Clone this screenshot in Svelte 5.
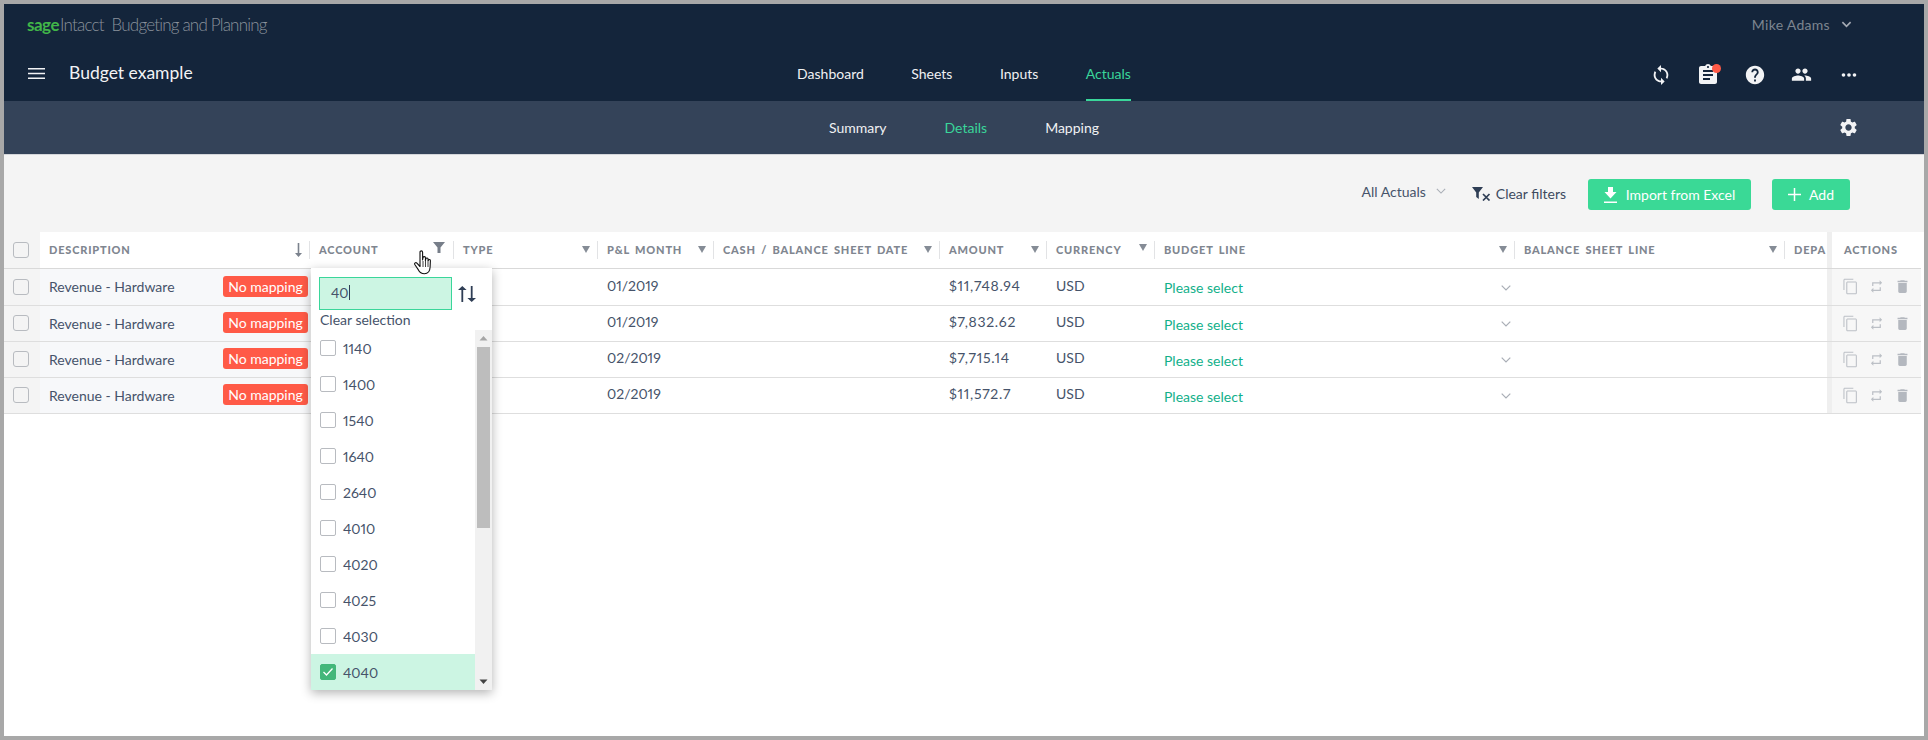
<script>
  const columns = [
    { label: 'Description', width: 270, sort: true },
    { label: 'Account', width: 144, funnel: true },
    { label: 'Type', width: 144 },
    { label: 'P&L Month', width: 116 },
    { label: 'Cash / Balance Sheet Date', width: 226 },
    { label: 'Amount', width: 107 },
    { label: 'Currency', width: 108, raised: true },
    { label: 'Budget Line', width: 360 },
    { label: 'Balance Sheet Line', width: 270 },
    { label: 'Depa', width: 42, clipped: true }
  ];

  const rows = [
    { month: '01/2019', amount: '$11,748.94' },
    { month: '01/2019', amount: '$7,832.62' },
    { month: '02/2019', amount: '$7,715.14' },
    { month: '02/2019', amount: '$11,572.7' }
  ];

  const accounts = ['1140', '1400', '1540', '1640', '2640', '4010', '4020', '4025', '4030', '4040'];
  const selected = '4040';

  const mainTabs = ['Dashboard', 'Sheets', 'Inputs', 'Actuals'];
  const subTabs = ['Summary', 'Details', 'Mapping'];
  const gridColumns = '36px ' + columns.map((c) => c.width + 'px').join(' ') + ' 94px';
</script>

<div class="frame">
  <header class="top">
    <div class="brand-row">
      <div class="brand">
        <span class="sage">sage</span><span class="intacct">Intacct</span>
        <span class="product">Budgeting and Planning</span>
      </div>
      <div class="user">
        <span>Mike Adams</span>
        <svg width="11" height="11" viewBox="0 0 12 12"><path d="M1.5 3.5 6 8l4.5-4.5" fill="none" stroke="#a4aab3" stroke-width="1.8" /></svg>
      </div>
    </div>
    <div class="main-row">
      <div class="title">
        <svg class="burger" width="17" height="11" viewBox="0 0 17 11"><path d="M0 .75h17M0 5.5h17M0 10.25h17" stroke="#f2f3f5" stroke-width="1.5" /></svg>
        <span>Budget example</span>
      </div>
      <nav class="tabs">
        {#each mainTabs as tab}
          <span class="tab" class:active={tab === 'Actuals'}>{tab}</span>
        {/each}
      </nav>
      <div class="top-icons">
        <svg width="22" height="22" viewBox="0 0 24 24"><path fill="#f2f3f5" d="M12 4V1L8 5l4 4V6c3.31 0 6 2.69 6 6 0 1.01-.25 1.97-.7 2.8l1.46 1.46C19.54 15.03 20 13.57 20 12c0-4.42-3.58-8-8-8zm0 14c-3.31 0-6-2.69-6-6 0-1.01.25-1.97.7-2.8L5.24 7.74C4.46 8.97 4 10.43 4 12c0 4.42 3.58 8 8 8v3l4-4-4-4v3z" /></svg>
        <span class="clip">
          <svg width="24" height="24" viewBox="0 0 24 24"><path fill="#f2f3f5" d="M19 3h-4.18C14.4 1.84 13.3 1 12 1c-1.3 0-2.4.84-2.82 2H5c-1.1 0-2 .9-2 2v14c0 1.1.9 2 2 2h14c1.1 0 2-.9 2-2V5c0-1.1-.9-2-2-2zm-7 0c.55 0 1 .45 1 1s-.45 1-1 1-1-.45-1-1 .45-1 1-1zm2 14H7v-2h7v2zm3-4H7v-2h10v2zm0-4H7V7h10v2z" /></svg>
          <i class="badge"></i>
        </span>
        <svg width="22" height="22" viewBox="0 0 24 24"><path fill="#f2f3f5" d="M12 2C6.48 2 2 6.48 2 12s4.48 10 10 10 10-4.48 10-10S17.52 2 12 2zm1 17h-2v-2h2v2zm2.07-7.75l-.9.92C13.45 12.9 13 13.5 13 15h-2v-.5c0-1.1.45-2.1 1.17-2.83l1.24-1.26c.37-.36.59-.86.59-1.41 0-1.1-.9-2-2-2s-2 .9-2 2H8c0-2.21 1.79-4 4-4s4 1.79 4 4c0 .88-.36 1.68-.93 2.25z" /></svg>
        <svg width="21" height="21" viewBox="0 0 24 24"><path fill="#f2f3f5" d="M16 11c1.66 0 2.99-1.34 2.99-3S17.66 5 16 5c-1.66 0-3 1.34-3 3s1.34 3 3 3zm-8 0c1.66 0 2.99-1.34 2.99-3S9.66 5 8 5C6.34 5 5 6.34 5 8s1.34 3 3 3zm0 2c-2.33 0-7 1.17-7 3.5V19h14v-2.5c0-2.33-4.67-3.5-7-3.5zm8 0c-.29 0-.62.02-.97.05 1.16.84 1.97 1.97 1.97 3.45V19h6v-2.5c0-2.33-4.67-3.5-7-3.5z" /></svg>
        <svg width="22" height="22" viewBox="0 0 24 24"><g fill="#f2f3f5"><circle cx="6" cy="12" r="2" /><circle cx="12" cy="12" r="2" /><circle cx="18" cy="12" r="2" /></g></svg>
      </div>
    </div>
  </header>

  <div class="subnav">
    <span></span>
    <nav class="subtabs">
      {#each subTabs as tab}
        <span class="tab" class:active={tab === 'Details'}>{tab}</span>
      {/each}
    </nav>
    <div class="gear">
      <svg width="21" height="21" viewBox="0 0 24 24"><path fill="#f2f3f5" d="M19.14 12.94c.04-.3.06-.61.06-.94 0-.32-.02-.64-.07-.94l2.03-1.58c.18-.14.23-.41.12-.61l-1.92-3.32c-.12-.22-.37-.29-.59-.22l-2.39.96c-.5-.38-1.03-.7-1.62-.94l-.36-2.54c-.04-.24-.24-.41-.48-.41h-3.84c-.24 0-.43.17-.47.41l-.36 2.54c-.59.24-1.13.57-1.62.94l-2.39-.96c-.22-.08-.47 0-.59.22L2.74 8.87c-.12.21-.08.47.12.61l2.03 1.58c-.05.3-.09.63-.09.94s.02.64.07.94l-2.03 1.58c-.18.14-.23.41-.12.61l1.92 3.32c.12.22.37.29.59.22l2.39-.96c.5.38 1.03.7 1.62.94l.36 2.54c.05.24.24.41.48.41h3.84c.24 0 .44-.17.47-.41l.36-2.54c.59-.24 1.13-.56 1.62-.94l2.39.96c.22.08.47 0 .59-.22l1.92-3.32c.12-.22.07-.47-.12-.61l-2.01-1.58zM12 15.6c-1.98 0-3.6-1.62-3.6-3.6s1.62-3.6 3.6-3.6 3.6 1.62 3.6 3.6-1.62 3.6-3.6 3.6z" /></svg>
    </div>
  </div>

  <div class="toolbar">
    <div class="view-select">
      <span>All Actuals</span>
      <svg width="10" height="10" viewBox="0 0 12 12"><path d="M1 3.5 6 8.5l5-5" fill="none" stroke="#a9aeb6" stroke-width="1.3" /></svg>
    </div>
    <div class="clear">
      <svg width="19" height="14" viewBox="0 0 19 14">
        <path fill="#2f3e55" d="M0 0h11L6.800 5.500V12L4.200 10V5.500z" />
        <path d="M11 7l6.500 6.500M17.500 7L11 13.500" stroke="#2f3e55" stroke-width="1.700" />
      </svg>
      <span>Clear filters</span>
    </div>
    <button class="btn import">
      <svg width="13" height="16" viewBox="0 0 13 16"><path fill="#fff" d="M4 0h5v5h3.500L6.500 11.500.500 5H4zM0 14.500h13V16H0z" /></svg>
      Import from Excel
    </button>
    <button class="btn add">
      <svg width="13" height="13" viewBox="0 0 13 13"><path d="M6.500 0v13M0 6.500h13" stroke="#fff" stroke-width="1.500" /></svg>
      Add
    </button>
  </div>

  <div class="table" style="grid-template-columns: {gridColumns}">
    <div class="head-check"><span class="box clear-box"></span></div>
    {#each columns as col}
      <div class="hcell">
        <div class="hinner" class:clipped={col.clipped}>
          <span class="hlabel">{col.label}</span>
          {#if col.sort}
            <svg width="7" height="14" viewBox="0 0 7 14"><path fill="#7b828d" d="M2.700 0h1.600v10H7l-3.500 4L0 10h2.700z" /></svg>
          {:else if col.funnel}
            <svg class="funnel" width="12" height="11" viewBox="0 0 12 11"><path fill="#777e89" d="M0 0h12L7.500 5.500V11h-3V5.500z" /></svg>
          {:else if !col.clipped}
            <svg class:raised={col.raised} width="8" height="7" viewBox="0 0 8 7"><path fill="#858c96" d="M0 0h8L4 7z" /></svg>
          {/if}
        </div>
      </div>
    {/each}
    <div class="hcell actions-head"><span class="hlabel">Actions</span></div>

    {#each rows as row}
      <div class="cell check"><span class="box clear-box"></span></div>
      <div class="cell desc">
        <span>Revenue - Hardware</span>
        <span class="no-map">No mapping</span>
      </div>
      <div class="cell"></div>
      <div class="cell"></div>
      <div class="cell text up">{row.month}</div>
      <div class="cell"></div>
      <div class="cell text up amount">{row.amount}</div>
      <div class="cell text up">USD</div>
      <div class="cell text select">
        <span>Please select</span>
        <svg width="10" height="6" viewBox="0 0 10 6"><path d="M.7.700 5 5 9.300.700" fill="none" stroke="#a9aeb6" stroke-width="1.200" /></svg>
      </div>
      <div class="cell"></div>
      <div class="cell"></div>
      <div class="cell actions">
        <svg width="17" height="17" viewBox="0 0 24 24"><path fill="#bcc0c6" d="M16 1H4c-1.100 0-2 .900-2 2v14h1.500V2.500H16V1zm3 4H8c-1.100 0-2 .900-2 2v14c0 1.100.900 2 2 2h11c1.100 0 2-.900 2-2V7c0-1.100-.900-2-2-2zm.500 16.500h-12v-15h12v15z" /></svg>
        <svg width="15" height="15" viewBox="0 0 24 24"><path fill="#bcc0c6" d="M7 7h10v3l4-4-4-4v3H5v6h2V7zm10 10H7v-3l-4 4 4 4v-3h12v-6h-2v4z" /></svg>
        <svg width="17" height="17" viewBox="0 0 24 24"><path fill="#b4b8bf" d="M6 19c0 1.100.900 2 2 2h8c1.100 0 2-.900 2-2V7H6v12zM19 4h-3.500l-1-1h-5l-1 1H5v2h14V4z" /></svg>
      </div>
    {/each}

    <div class="popup">
      <div class="search-row">
        <div class="search">40<i class="caret"></i></div>
        <svg width="18" height="16" viewBox="0 0 18 16"><path fill="#2f3e55" d="M3.400 16V4H0L4.300 0l4.300 4H5.200v12zM12.800 0v12H9.400l4.300 4 4.300-4h-3.400V0z" /></svg>
      </div>
      <div class="clear-sel">Clear selection</div>
      <div class="list">
        <div class="items">
          {#each accounts as acc}
            <div class="item" class:on={acc === selected}>
              <span class="box" class:checked={acc === selected}>
                {#if acc === selected}
                  <svg width="12" height="10" viewBox="0 0 12 10"><path d="M1.500 5 4.500 8 10.500 1.500" fill="none" stroke="#fff" stroke-width="1.300" /></svg>
                {/if}
              </span>
              <span>{acc}</span>
            </div>
          {/each}
        </div>
        <div class="scrollbar">
          <svg width="17" height="17" viewBox="0 0 17 17"><path fill="#a5a5a5" d="M4.500 10.500 8.500 6l4 4.500z" /></svg>
          <div class="track"><div class="thumb"></div></div>
          <svg width="17" height="17" viewBox="0 0 17 17"><path fill="#444" d="M4.500 6.500 8.500 11l4-4.500z" /></svg>
        </div>
      </div>
    </div>

    <svg class="pointer" width="20" height="26" viewBox="0 0 20 26">
      <path fill="#fff" stroke="#111" stroke-width="1.100" stroke-linejoin="round" d="M6 2.200c0-1.800 2.600-1.800 2.600 0V10l.4-2.400c.3-1.500 2.500-1.300 2.500.3l-.1 2.600.4-1.700c.4-1.300 2.300-1 2.300.4l-.1 2 .4-1c.5-1.100 2-.7 2 .5l-.3 6.600c-.2 3.700-1.800 6.400-5.700 6.400-3.300 0-4.800-1.300-6-3.800L.8 14.500c-.7-1.400 1-2.500 2.100-1.300L6 16.500z" />
      <path d="M9 11v6M11.500 11v6M14 12v5" stroke="#111" stroke-width=".8" />
    </svg>
  </div>
</div>

<style>
  :global(body) {
    margin: 0;
    background: #fff;
  }

  .frame {
    box-sizing: border-box;
    width: 1928px;
    height: 740px;
    border: 4px solid #a8a8a8;
    overflow: hidden;
    font-family: Lato, 'Open Sans', sans-serif;
    font-size: 14px;
    font-variant-numeric: proportional-nums;
    color: #46536a;
    background: #fff;
  }

  .top {
    height: 97px;
    background: #14253b;
  }

  .brand-row {
    height: 41px;
    display: flex;
    align-items: center;
    justify-content: space-between;
    padding: 0 72px 0 23px;
  }

  .brand {
    font-size: 17px;
    font-weight: 300;
    letter-spacing: -0.8px;
    color: #8a929c;
    white-space: nowrap;
  }

  .sage {
    color: #41b649;
    font-weight: 700;
    letter-spacing: -0.5px;
  }

  .intacct {
    margin-left: 1px;
  }

  .product {
    margin-left: 4px;
  }

  .user {
    display: flex;
    align-items: center;
    gap: 11px;
    color: #7d8590;
    letter-spacing: 0.3px;
  }

  .main-row {
    height: 56px;
    display: grid;
    grid-template-columns: 1fr auto 1fr;
    align-items: center;
  }

  .title {
    display: flex;
    align-items: center;
    padding-left: 24px;
    font-size: 17.5px;
    color: #f2f3f5;
    margin-top: -1px;
  }

  .burger {
    margin-right: 24px;
    margin-top: 2px;
  }

  .tabs {
    display: flex;
    gap: 47.5px;
    height: 100%;
  }

  .tab {
    display: flex;
    align-items: center;
    box-sizing: border-box;
    color: #f0f1f3;
    font-size: 14px;
  }

  .tabs .tab {
    height: 100%;
    padding-top: 3px;
    border-bottom: 2px solid transparent;
  }

  .tab.active {
    color: #3ad69a;
  }

  .tabs .tab.active {
    border-bottom-color: #3ad69a;
  }

  .top-icons {
    display: grid;
    grid-template-columns: repeat(5, 47px);
    justify-content: end;
    justify-items: center;
    align-items: center;
    padding-right: 52px;
    margin-top: 3px;
  }

  .clip {
    position: relative;
    display: flex;
  }

  .badge {
    position: absolute;
    top: 1px;
    right: -1px;
    width: 9px;
    height: 9px;
    border-radius: 50%;
    background: #ff5a47;
  }

  .subnav {
    height: 54px;
    box-sizing: border-box;
    display: grid;
    grid-template-columns: 1fr auto 1fr;
    align-items: center;
    background: #344359;
    border-bottom: 1px solid #d4d6da;
  }

  .subtabs {
    display: flex;
    gap: 58px;
  }

  .gear {
    display: flex;
    justify-content: flex-end;
    padding-right: 65px;
  }

  .toolbar {
    height: 77px;
    box-sizing: border-box;
    display: flex;
    align-items: flex-start;
    justify-content: flex-end;
    padding: 24px 74px 0 0;
    background: #f4f4f4;
  }

  .view-select {
    display: flex;
    align-items: center;
    gap: 10px;
    height: 24px;
    margin-right: 26px;
    color: #46536a;
  }

  .clear {
    display: flex;
    align-items: center;
    gap: 5px;
    height: 29px;
    margin-right: 22px;
    color: #3d4a5f;
    font-size: 14px;
  }

  .btn {
    display: flex;
    align-items: center;
    justify-content: center;
    height: 31px;
    padding: 0;
    border: 0;
    border-radius: 3px;
    background: #3ad996;
    color: #fff;
    font: inherit;
    font-size: 14px;
  }

  .import {
    width: 163px;
    gap: 9px;
    margin-right: 21px;
  }

  .add {
    width: 78px;
    gap: 8px;
  }

  .table {
    position: relative;
    display: grid;
    grid-template-rows: 37px 37px;
    grid-auto-rows: 36px;
  }

  .head-check {
    display: flex;
    align-items: center;
    justify-content: center;
    padding: 0 2px 1px 0;
    background: #f4f4f4;
    border-bottom: 1px solid #d9d9d9;
  }

  .hcell {
    display: flex;
    align-items: center;
    padding-bottom: 1px;
    background: #fff;
    border-bottom: 1px solid #d9d9d9;
    min-width: 0;
  }

  .hinner {
    flex: 1;
    min-width: 0;
    height: 18px;
    display: flex;
    align-items: center;
    justify-content: space-between;
    padding: 0 7px 0 9px;
    border-right: 1px solid #e2e3e5;
    overflow: hidden;
    white-space: nowrap;
  }

  .hinner.clipped {
    border-right: 0;
    padding-right: 0;
  }

  .hlabel {
    font-size: 11px;
    font-weight: 900;
    letter-spacing: 0.8px;
    word-spacing: 2px;
    text-transform: uppercase;
    color: #808690;
  }

  .funnel {
    margin-top: -5px;
    margin-right: 1px;
  }

  .raised {
    margin-top: -5px;
  }

  .actions-head {
    background: #fff;
    box-shadow: inset 5px 0 0 #efefef;
    padding-left: 17px;
  }

  .cell {
    display: flex;
    align-items: center;
    box-sizing: border-box;
    padding-bottom: 1px;
    border-bottom: 1px solid #dedede;
    min-width: 0;
  }

  .check {
    justify-content: center;
    padding-right: 2px;
    background: #f4f4f4;
  }

  .desc {
    justify-content: space-between;
    padding: 0 2px 1px 9px;
    background: #f7f8fa;
  }

  .text {
    padding-left: 9px;
    white-space: nowrap;
  }

  .up {
    padding-bottom: 4px;
  }

  .amount {
    letter-spacing: 0.7px;
  }

  .select {
    justify-content: space-between;
    padding: 1px 4px 0 9px;
    color: #12b08a;
  }

  .no-map {
    display: flex;
    align-items: center;
    justify-content: center;
    width: 85px;
    height: 21px;
    border-radius: 3px;
    background: #ff5a47;
    color: #fff;
    margin-top: -1px;
  }

  .actions {
    display: grid;
    grid-template-columns: repeat(3, 26px);
    justify-items: center;
    padding: 0 0 1px 10px;
    background: #f7f7f7;
    box-shadow: inset 5px 0 0 #efefef;
  }

  .box {
    box-sizing: border-box;
    display: inline-flex;
    align-items: center;
    justify-content: center;
    flex: none;
    width: 16px;
    height: 16px;
    border: 1px solid #b8bbc0;
    border-radius: 2px;
    background: #fff;
  }

  .clear-box {
    background: transparent;
    border-radius: 3px;
  }

  .box.checked {
    background: #43b77a;
    border-color: #43b77a;
  }

  .popup {
    position: absolute;
    z-index: 2;
    left: 307px;
    top: 36px;
    width: 181px;
    height: 422px;
    display: flex;
    flex-direction: column;
    background: #fff;
    box-shadow: 0 3px 10px rgba(0, 0, 0, 0.3);
  }

  .search-row {
    display: flex;
    align-items: center;
    gap: 6px;
    padding: 9px 0 0 8px;
  }

  .search {
    box-sizing: border-box;
    width: 133px;
    height: 33px;
    display: flex;
    align-items: center;
    padding: 0 0 2px 11px;
    border: 1px solid #3ad69a;
    background: #ccf5e3;
  }

  .caret {
    width: 1px;
    height: 15px;
    background: #2f3e55;
  }

  .clear-sel {
    height: 18px;
    margin-bottom: 2px;
    display: flex;
    align-items: center;
    padding-left: 9px;
  }

  .list {
    flex: 1;
    display: flex;
    min-height: 0;
  }

  .items {
    flex: 1;
  }

  .item {
    height: 36px;
    display: flex;
    align-items: center;
    gap: 7px;
    padding-left: 9px;
  }

  .item.on {
    background: #ccf5e3;
  }

  .scrollbar {
    width: 17px;
    display: flex;
    flex-direction: column;
    background: #f1f1f1;
  }

  .track {
    flex: 1;
  }

  .thumb {
    width: 13px;
    height: 181px;
    margin-left: 2px;
    background: #bdbdbd;
  }

  .pointer {
    position: absolute;
    z-index: 3;
    left: 410px;
    top: 18px;
  }
</style>
